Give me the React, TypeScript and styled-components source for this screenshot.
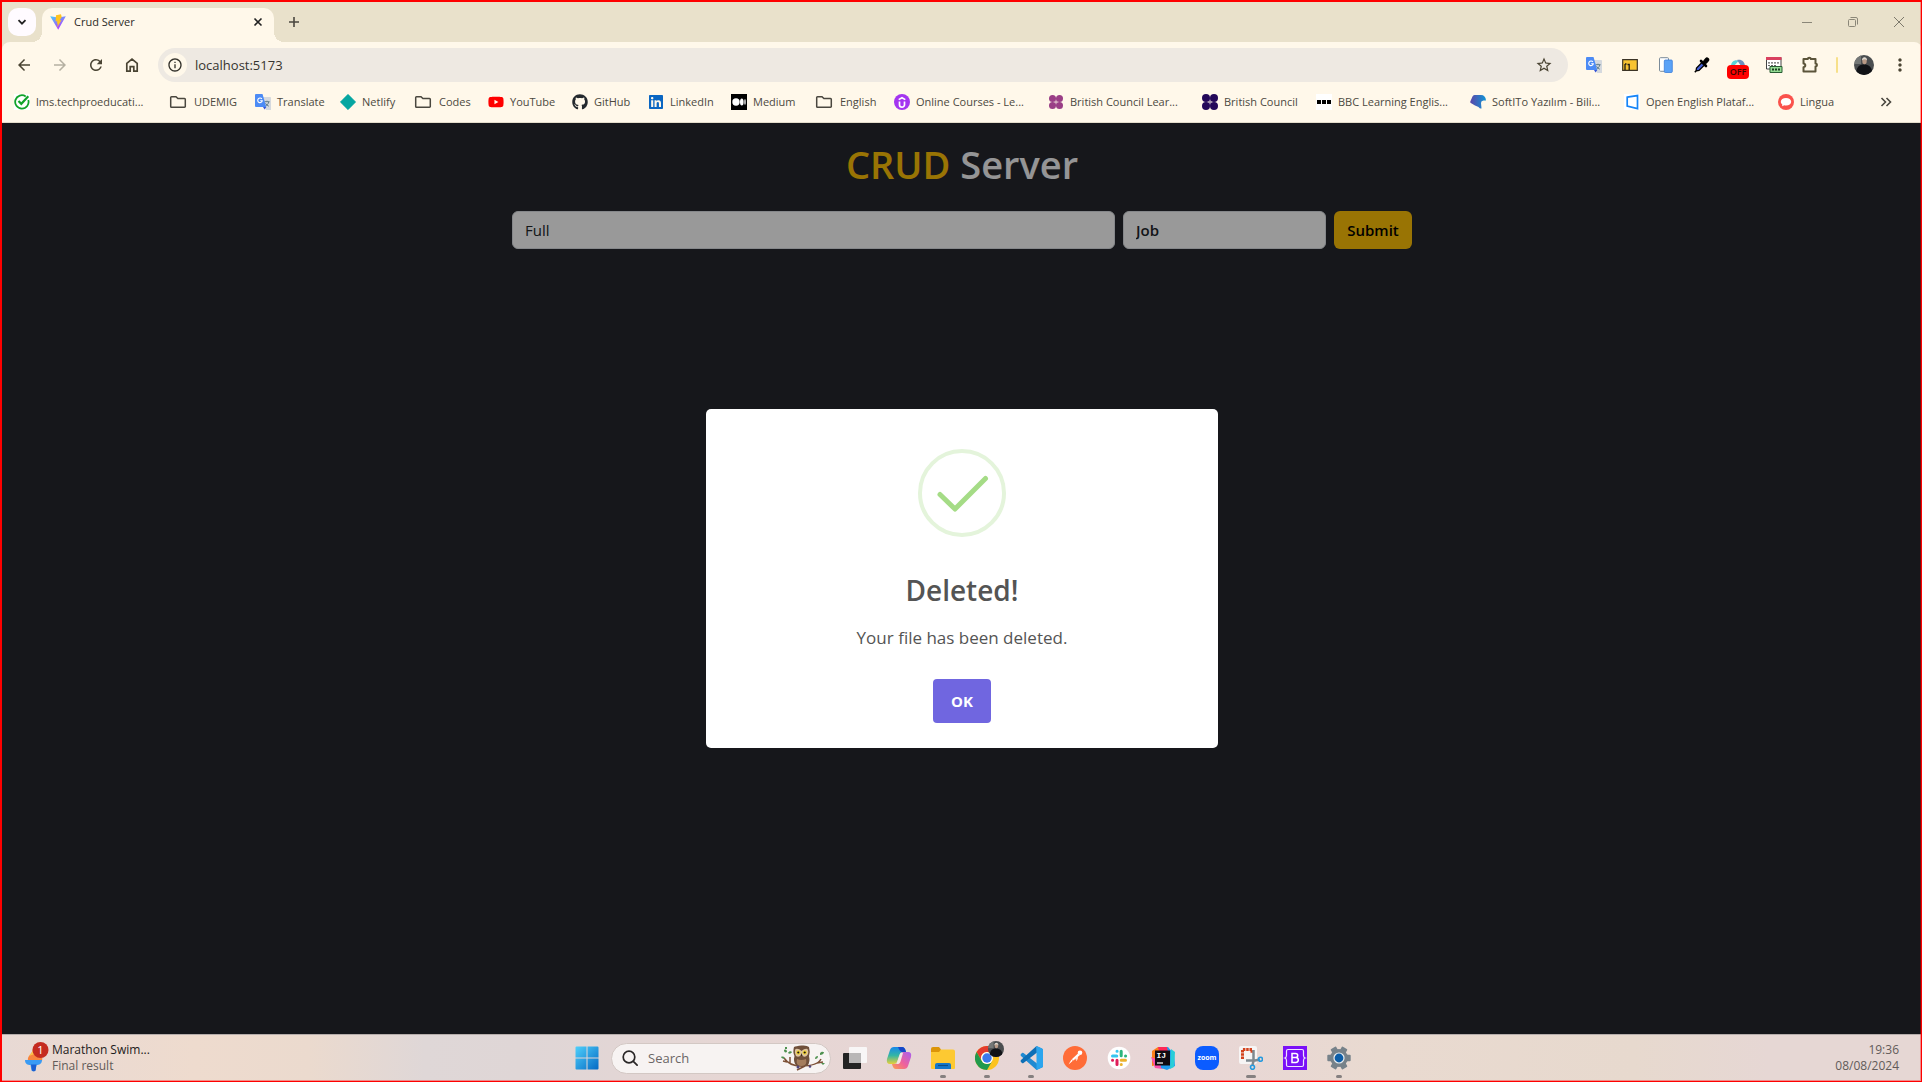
import React from "react";
import styled, { createGlobalStyle } from "styled-components";
import { FaGithub, FaYoutube, FaLinkedin } from "react-icons/fa";
import { MdArrowBack, MdArrowForward, MdRefresh, MdStarBorder, MdMoreVert, MdInfoOutline } from "react-icons/md";

const sans = `"Segoe UI", "Open Sans", "Noto Sans", sans-serif`;

const GlobalStyle = createGlobalStyle`
  * { box-sizing: border-box; }
  body { margin: 0; font-family: ${sans}; }
  button, input { font-family: inherit; }
  h1, h2, p { margin: 0; }
`;

const Screen = styled.div`
  position: relative;
  display: flex;
  flex-direction: column;
  min-height: 100vh;
  padding: 2px 0 0 2px;
  background: #ff0000;
  overflow: hidden;
  &::after {
    content: "";
    position: absolute;
    inset: 0;
    border: solid #ff0000;
    border-width: 2px 1px 1px 2px;
    box-shadow: inset -1px -1px 0 rgba(255, 0, 0, 0.35);
    pointer-events: none;
  }
`;

/* ---------- browser chrome ---------- */

const TabStrip = styled.div`
  display: flex;
  align-items: center;
  height: 40px;
  padding-left: 6px;
  background: #e9e1cb;
`;

const TabSearch = styled.button`
  display: grid;
  place-items: center;
  width: 28px;
  height: 28px;
  margin-right: 6px;
  padding: 0;
  border: 0;
  border-radius: 10px;
  background: #fffbff;
`;

const Tab = styled.div`
  position: relative;
  display: flex;
  align-items: center;
  align-self: flex-end;
  gap: 8px;
  width: 232px;
  height: 34px;
  padding: 0 8px 6px;
  border-radius: 10px 10px 0 0;
  background: #fff8ea;
  font-size: 11px;
  line-height: 16px;
  color: #2b2a26;
  &::before,
  &::after {
    content: "";
    position: absolute;
    bottom: 0;
    width: 10px;
    height: 10px;
  }
  &::before {
    left: -10px;
    background: radial-gradient(circle at 0 0, transparent 10px, #fff8ea 10px);
  }
  &::after {
    right: -10px;
    background: radial-gradient(circle at 100% 0, transparent 10px, #fff8ea 10px);
  }
`;

const TabTitle = styled.span`
  flex: 1;
`;

const PlainButton = styled.button<{ $w: number; $h: number }>`
  display: grid;
  place-items: center;
  width: ${(p) => p.$w}px;
  height: ${(p) => p.$h}px;
  padding: 0;
  border: 0;
  background: transparent;
  color: #4a4433;
`;

const NewTab = styled(PlainButton)`
  margin-left: 6px;
`;

const WindowControls = styled.div`
  display: flex;
  margin-left: auto;
`;

const Toolbar = styled.div`
  display: flex;
  align-items: center;
  padding: 6px 4px 3px;
  border-radius: 8px 8px 0 0;
  background: #fff8ea;
`;

const ToolbarBack = styled.div`
  background: #e9e1cb;
`;

const Omnibox = styled.div`
  display: flex;
  flex: 1;
  align-items: center;
  gap: 8px;
  height: 34px;
  margin: 0 8px;
  padding: 0 6px 0 5px;
  border-radius: 17px;
  background: #eee9e2;
`;

const SiteInfo = styled.button`
  display: grid;
  place-items: center;
  width: 24px;
  height: 24px;
  padding: 0;
  border: 0;
  border-radius: 50%;
  background: #fff8ea;
  color: #33312b;
`;

const Address = styled.input`
  flex: 1;
  min-width: 0;
  padding: 0;
  border: 0;
  outline: 0;
  background: transparent;
  font-size: 13px;
  line-height: 20px;
  color: #36342f;
`;

const Separator = styled.span`
  width: 2px;
  height: 16px;
  margin: 0 8px;
  border-radius: 1px;
  background: #f7e08a;
`;

const BookmarkBar = styled.nav`
  display: flex;
  align-items: center;
  height: 38px;
  padding: 0 22px 4px 12px;
  border-bottom: 1px solid #e3dccb;
  background: #fff8ea;
`;

const Bookmark = styled.a<{ $width: number }>`
  display: flex;
  flex: 0 0 ${(p) => p.$width}px;
  align-items: center;
  gap: 6px;
  font-size: 11px;
  line-height: 16px;
  color: #4c493f;
  text-decoration: none;
  white-space: nowrap;
  svg {
    flex: none;
  }
`;

const MoreBookmarks = styled(PlainButton)`
  margin-left: auto;
`;

/* ---------- page ---------- */

const Page = styled.main`
  position: relative;
  flex: 1;
  background: #25272d;
`;

const Content = styled.div`
  display: flex;
  flex-direction: column;
  gap: 23px;
  max-width: 900px;
  margin: 0 auto;
  padding-top: 17px;
`;

const Heading = styled.h1`
  font-size: 38px;
  font-weight: 600;
  line-height: 48px;
  text-align: center;
  color: #f8f9fa;
`;

const Accent = styled.span`
  color: #ffc107;
`;

const Form = styled.form`
  display: flex;
  gap: 8px;
`;

const Field = styled.input<{ $width?: number }>`
  flex: ${(p) => (p.$width ? `0 0 ${p.$width}px` : "1")};
  min-width: 0;
  height: 38px;
  padding: 0 12px;
  border: 1px solid #dee2e6;
  border-radius: 6px;
  background: #ffffff;
  font-size: 15px;
  font-weight: ${(p) => (p.$width ? 600 : 400)};
  color: #212529;
  &::placeholder {
    color: #212529;
    opacity: 1;
  }
`;

const Submit = styled.button`
  width: 78px;
  height: 38px;
  padding: 0;
  border: 0;
  border-radius: 6px;
  background: #ffc107;
  font-size: 15px;
  font-weight: 600;
  color: #000000;
`;

const Backdrop = styled.div`
  position: absolute;
  inset: 0;
  display: grid;
  place-items: center;
  background: rgba(0, 0, 0, 0.4);
`;

const Dialog = styled.div`
  display: flex;
  flex-direction: column;
  align-items: center;
  width: 512px;
  padding: 40px 0 25px;
  border-radius: 5px;
  background: #ffffff;
  color: #545454;
`;

const DialogTitle = styled.h2`
  margin-top: 33px;
  font-size: 28px;
  font-weight: 600;
  line-height: 40px;
`;

const DialogText = styled.p`
  margin-top: 16px;
  font-size: 17px;
  line-height: 24px;
`;

const Confirm = styled.button`
  width: 58px;
  height: 44px;
  margin-top: 29px;
  padding: 0;
  border: 0;
  border-radius: 4px;
  background: #7066e0;
  font-size: 15px;
  font-weight: 700;
  color: #ffffff;
`;

/* ---------- taskbar ---------- */

const Taskbar = styled.footer`
  display: grid;
  grid-template-columns: 1fr auto 1fr;
  align-items: center;
  height: 48px;
  padding: 0 0 1px 2px;
  border-top: 1px solid #b5adab;
  background: linear-gradient(90deg, #e8d9d4 0, #eedbce 10%, #ebdace 16%, #dfd7d7 22%, #dfd6d6 27%, #e6d6d4 38%, #e8d6d6 62%, #e9dad0 72%, #e7d9ce 85%, #e6d7d4 92%, #e6d7d4 100%);
`;

const Widget = styled.button`
  position: relative;
  display: flex;
  align-items: center;
  justify-self: start;
  padding: 0 0 0 20px;
  border: 0;
  background: transparent;
  text-align: left;
`;

const Lines = styled.span<{ $right?: boolean }>`
  display: flex;
  flex-direction: column;
  font-size: 12px;
  line-height: 16px;
  color: #625b59;
  text-align: ${(p) => (p.$right ? "right" : "left")};
`;

const Strong = styled.span`
  color: #1d1b1b;
`;

const Apps = styled.div`
  display: flex;
  align-items: center;
`;

const AppButton = styled.button<{ $bar?: number }>`
  position: relative;
  display: grid;
  place-items: center;
  width: 44px;
  height: 46px;
  padding: 0;
  border: 0;
  background: transparent;
  &::after {
    content: "";
    position: absolute;
    bottom: 3px;
    left: 50%;
    width: ${(p) => p.$bar ?? 0}px;
    height: 3px;
    border-radius: 2px;
    background: #858080;
    transform: translateX(-50%);
  }
`;

const SearchBox = styled.label`
  display: flex;
  align-items: center;
  gap: 10px;
  width: 220px;
  height: 31px;
  margin: 0 2px;
  padding: 0 5px 0 10px;
  border: 1px solid #d3c8c4;
  border-radius: 16px;
  background: #f7f3f2;
`;

const SearchInput = styled.input`
  flex: 1;
  min-width: 0;
  padding: 0;
  border: 0;
  outline: 0;
  background: transparent;
  font-size: 13px;
  line-height: 20px;
  &::placeholder {
    color: #6b6666;
    opacity: 1;
  }
`;

const Clock = styled.button`
  justify-self: end;
  padding: 0 23px 0 0;
  border: 0;
  background: transparent;
`;

/* ---------- drawings ---------- */

const Vite = () => (
  <svg width="16" height="16" viewBox="0 0 16 16">
    <defs>
      <linearGradient id="vite" x1="0" y1="0" x2=".6" y2="1">
        <stop offset="0" stopColor="#41d1ff" />
        <stop offset="1" stopColor="#bd34fe" />
      </linearGradient>
    </defs>
    <path d="M.2 2.2 8.2 15.8 15.8 2.2 8 3.6Z" fill="url(#vite)" />
    <path d="M11 .2 6 1.2l-.4 6.4 1.7-.4-.5 2.6 1.1-.3-.8 3.9L11.6 6l-2 .4L11.700 3Z" fill="#ffc31f" />
  </svg>
);

const TranslateIcon = () => (
  <svg width="16" height="16" viewBox="0 0 16 16">
    <path d="M6 3h9.200a.8.8 0 0 1 .8.8V16h-5Z" fill="#d5d9de" />
    <path d="M9.500 7.700h5M12 6.700v1M13.800 7.900c-.5 2-1.700 3.200-3 4M10.500 9.300c.8 1.300 1.900 2.200 3.300 2.900" stroke="#607d8b" fill="none" strokeWidth="1" />
    <path d="M1 0h6.500l3.800 13H1a1 1 0 0 1-1-1V1a1 1 0 0 1 1-1Z" fill="#4c8bf5" />
    <path d="M8 13h3.300L9.600 15.600Z" fill="#3555d8" />
    <path d="M6.900 5A2.300 2.300 0 1 0 7.300 6.700H5.200" stroke="#fff" fill="none" strokeWidth="1.100" />
  </svg>
);

const Folder = () => (
  <svg width="20" height="16" viewBox="0 0 20 16" fill="none" stroke="#4a473f" strokeWidth="1.500">
    <path d="M3.500 2.700H8l1.900 1.900h6.600a.8.8 0 0 1 .8.8v7.100a.8.8 0 0 1-.8.8h-13a.8.8 0 0 1-.8-.8v-9a.8.8 0 0 1 .8-.8Z" />
  </svg>
);

const Lms = () => (
  <svg width="16" height="16" viewBox="0 0 16 16" fill="none" stroke="#11a32b">
    <rect width="16" height="16" fill="#fff" stroke="none" />
    <path d="M11.700 2.400A6.700 6.700 0 1 0 14.300 6" strokeWidth="1.800" />
    <path d="M4.500 7 7.300 9.800 14.300 2.300" strokeWidth="2.200" />
  </svg>
);

const Netlify = () => (
  <svg width="16" height="16" viewBox="0 0 16 16">
    <path d="M8 .3 15.700 8 8 15.700.3 8Z" fill="#05a6a1" stroke="#05a6a1" strokeLinejoin="round" strokeWidth=".6" />
  </svg>
);

const Medium = () => (
  <svg width="16" height="16" viewBox="0 0 16 16">
    <rect width="16" height="16" fill="#000" />
    <circle cx="5" cy="8" r="3.700" fill="#fff" />
    <ellipse cx="10.800" cy="8" rx="1.800" ry="3.500" fill="#fff" />
    <ellipse cx="14" cy="8" rx=".7" ry="3.100" fill="#fff" />
  </svg>
);

const Udemy = () => (
  <svg width="16" height="16" viewBox="0 0 16 16" fill="none" stroke="#fff">
    <circle cx="8" cy="8" r="8" fill="#a435f0" stroke="none" />
    <path d="M5.500 7.500v3.300a2.500 2.400 0 0 0 5 0V7.500" strokeWidth="1.700" />
    <path d="M4.700 5.600 8 3.700l3.300 1.900" strokeWidth="1.600" />
  </svg>
);

const Dots = ({ color, r }: { color: string; r: number }) => (
  <svg width="16" height="16" viewBox="0 0 16 16" fill={color}>
    {[[8 - r, 8 - r], [8 + r, 8 - r], [8 - r, 8 + r], [8 + r, 8 + r]].map(([x, y]) => (
      <circle key={`${x}-${y}`} cx={x} cy={y} r={r} />
    ))}
    <rect x="6.500" y="4" width="3" height="8" opacity=".4" />
  </svg>
);

const Bbc = () => (
  <svg width="16" height="16" viewBox="0 0 16 16">
    <rect width="16" height="16" fill="#fff" />
    <path d="M1 6h4v4H1ZM6 6h4v4H6ZM11 6h4v4h-4Z" fill="#000" />
  </svg>
);

const Softito = () => (
  <svg width="16" height="16" viewBox="0 0 16 16">
    <defs>
      <linearGradient id="soft">
        <stop offset="0" stopColor="#5b46a8" />
        <stop offset="1" stopColor="#1195d6" />
      </linearGradient>
    </defs>
    <path d="M4.500 1H11q4.500 0 5 5.500h-2.500Q11 6.700 11 9l.5 5.500Q10 15 8.500 13L5 11.500.8 9Q0 8.500.3 7.500L2.500 2.500Q3 1 4.500 1Z" fill="url(#soft)" />
  </svg>
);

const OpenEnglish = () => (
  <svg width="16" height="16" viewBox="0 0 16 16">
    <rect width="16" height="16" fill="#fff" />
    <path d="M3.200 3.200 13.500 1.600v13L3.200 12.200Z" fill="none" stroke="#1685f8" strokeWidth="1.700" />
  </svg>
);

const Lingua = () => (
  <svg width="16" height="16" viewBox="0 0 16 16">
    <circle cx="8" cy="8" r="8" fill="#fa524c" />
    <path d="M8 4c3 0 5.200 1.500 5.200 3.700S11 11.400 8 11.400c-.6 0-1.200 0-1.700-.2L4.200 12.300V10.300C3.300 9.600 2.800 8.700 2.800 7.700 2.800 5.500 5 4 8 4Z" fill="#fff" />
  </svg>
);

const Home = () => (
  <svg width="16" height="16" viewBox="0 0 16 16" fill="none" stroke="#4a4433" strokeWidth="1.700">
    <path d="M2.800 14.200V6.300L8 2.200l5.200 4.100v7.900H9.800V9.600H6.200v4.600Z" />
  </svg>
);

const Avatar = ({ size }: { size: number }) => (
  <svg width={size} height={size} viewBox="0 0 20 20">
    <defs>
      <clipPath id={`face${size}`}><circle cx="10" cy="10" r="10" /></clipPath>
    </defs>
    <g clipPath={`url(#face${size})`}>
      <rect width="20" height="20" fill="#4b4e50" />
      <rect width="7" height="9" fill="#747776" />
      <path d="M2 20c0-8 3-10.500 8-10.500s8.500 2.500 8.500 10.500Z" fill="#101216" />
      <ellipse cx="10.500" cy="6" rx="2.200" ry="3.200" fill="#b99a86" />
      <path d="M8 5.500c-.3-4.500 5.300-4.500 5 0-1.500-1.800-3.500-1.800-5 0Z" fill="#ded9d0" />
    </g>
  </svg>
);

const Card = () => (
  <svg width="16" height="16" viewBox="0 0 16 16">
    <path d="M.7 2.700h14.600v10.600H.7Z" fill="#f7c331" stroke="#3b3426" strokeWidth="1.200" />
    <path d="M3 7v6M3 7h1.500M5.500 7.500h1.700v5.500" fill="none" stroke="#1d1b16" strokeWidth="1.300" />
  </svg>
);

const Devices = () => (
  <svg width="16" height="16" viewBox="0 0 16 16">
    <rect x="1.500" y=".7" width="9" height="13.600" rx="1" fill="#fff" stroke="#7b8b99" />
    <rect x="6.300" y="3" width="8" height="12.500" rx="1" fill="#5aa2f7" stroke="#3b7edb" strokeWidth=".8" />
  </svg>
);

const Dropper = () => (
  <svg width="16" height="16" viewBox="0 0 16 16">
    <path d="m2 14 .5-3 5.500-5.500 2.500 2.500L5 13.500Z" fill="#4660d8" stroke="#000" strokeWidth="1.300" />
    <path d="m7 4 5 5M9.300 6.300 13.200 2.400" stroke="#000" strokeWidth="2.600" strokeLinecap="round" />
    <path d="M13 2.700 11.500 4.500" stroke="#000" strokeWidth="4.500" strokeLinecap="round" />
    <path d="M.8 15.200 2 14" stroke="#000" strokeWidth="1.500" />
  </svg>
);

const OffWrap = styled.span`
  position: relative;
  display: block;
  width: 16px;
  height: 16px;
`;

const OffBadge = styled.span`
  position: absolute;
  top: 8px;
  left: -3px;
  width: 22px;
  border-radius: 4px;
  background: #ff0000;
  font-size: 9px;
  font-weight: 600;
  line-height: 14px;
  text-align: center;
  color: #3a0500;
`;

const Cloud = () => (
  <svg width="16" height="16" viewBox="0 0 16 16">
    <path d="M1 9c0-5 5-7 7.500-5L4 9Z" fill="#5ad2d8" />
    <path d="M7 3c5-1 7.500 2 8 6H11Z" fill="#6d8fc0" />
    <path d="M5 9c1-3 4-3 6 0Z" fill="#fff8ea" />
  </svg>
);

const CssCode = () => (
  <svg width="18" height="18" viewBox="0 0 18 18">
    <path d="M1.500 1.500h14.500v11.500H1.500Z" fill="#fff" stroke="#444" />
    <path d="M1 1h15.500v3H1Z" fill="#d9405f" />
    <path d="M3 6.800h11M3 9.500h8" stroke="#666" strokeWidth="1.200" strokeDasharray="2 1" />
    <path d="M5 10.500h12v6H5Z" fill="#93dc93" stroke="#285c33" />
    <path d="M7 13.500h8" stroke="#1c3c22" strokeWidth="2" strokeDasharray="2 1" />
  </svg>
);

const Puzzle = () => (
  <svg width="18" height="18" viewBox="0 0 18 18" fill="none" stroke="#5b543a" strokeWidth="2" strokeLinejoin="round">
    <path d="M2.500 3h4.200c.3-1.800 2.900-1.800 3.200 0h4.600v4.500c2 .3 2 2.700 0 3v5H2.500v-4.300c2.400-.3 2.400-3.500 0-3.800Z" />
  </svg>
);

const SuccessMark = () => (
  <svg width="88" height="88" viewBox="0 0 88 88" fill="none">
    <circle cx="44" cy="44" r="42" stroke="#e4f4db" strokeWidth="4" />
    <path d="M22 45.500 37 60 67.500 29.500" stroke="#a5dc86" strokeWidth="5" strokeLinecap="round" strokeLinejoin="round" />
  </svg>
);

const Torch = () => (
  <svg width="28" height="34" viewBox="0 0 28 34">
    <path d="M4 20c-1-6 4-6 5-12 3 0 6 2 7 5 2-1 3 4 2 7Z" fill="#f9853e" />
    <path d="M5 15c2-3 4-4 4-7l4 4Z" fill="#fcc449" />
    <path d="M1 19h17c0 4-3 5-5.500 5l-1 5.500c-.5 1-3.500 1-4 0l-1-5.500C3.500 24 1 23 1 19Z" fill="#3a9bf4" />
    <path d="M7 23.500h5.500l-1 6c-.5 1-3 1-3.500 0Z" fill="#1d5fd0" />
    <circle cx="16.500" cy="9" r="8" fill="#c42b1f" />
    <text x="16.500" y="13" textAnchor="middle" fontSize="11" fill="#fff">1</text>
  </svg>
);

const Windows = () => (
  <svg width="24" height="24" viewBox="0 0 24 24">
    <defs>
      <linearGradient id="win" x1="0" y1="0" x2="1" y2="1">
        <stop offset="0" stopColor="#4fd0fb" />
        <stop offset="1" stopColor="#0469c4" />
      </linearGradient>
    </defs>
    <path d="M1.500.5H11.500V11.500H.5V1.500a1 1 0 0 1 1-1ZM12.500.5h10a1 1 0 0 1 1 1v10h-11ZM.5 12.500h11v11h-10a1 1 0 0 1-1-1ZM12.500 12.500h11v10a1 1 0 0 1-1 1h-10Z" fill="url(#win)" />
  </svg>
);

const Magnifier = () => (
  <svg width="16" height="16" viewBox="0 0 16 16" fill="none" stroke="#2a2727" strokeWidth="1.700" strokeLinecap="round">
    <circle cx="7" cy="7" r="5.800" />
    <path d="m11.300 11.300 3.800 3.800" />
  </svg>
);

const Owl = () => (
  <svg width="44" height="26" viewBox="0 0 44 26">
    <path d="M3 13c4 6 9 8 17 8 9 0 17-1 20-7M6 17l-4-1M9 12v7M36 18l6-1M16 25l8-4" fill="none" stroke="#7d5036" strokeWidth="1.500" />
    <path d="M3 5c2-1 3 0 3 2-2 1-3 0-3-2ZM7 8c1-2 3-2 4-1-1 2-3 2-4 1ZM0 12c2-1 3 0 4 1-1 1-3 1-4-1ZM39 8c2-2 3-1 4-1 0 2-2 3-4 3ZM34 14c0-2 1-3 3-3 0 2-1 3-3 3ZM4 2h2v2H4ZM40 18h4l-2 2Z" fill="#4f9150" />
    <path d="M13 2q2-1 7.500-1.500T28 2q1.500 5 0 9 1.500 6-1.500 9.500-6 2-11.500 0-3-4-1.500-9.500-2-4-.5-9Z" fill="#70503a" />
    <path d="M14.500 4q3-1 6 2 3.500-3 6-2 2 4-1 7-2.500 2-5-1-3 3-5.500 1-2-4-.5-7Z" fill="#ddc3a2" />
    <path d="M16 14q4 2 9 0 1 4-1 6-4 2-7 0-2-2-1-6Z" fill="#a57d5c" />
    <circle cx="17.300" cy="7.500" r="2.200" fill="#f3d43a" />
    <circle cx="23.700" cy="7.500" r="2.200" fill="#f3d43a" />
    <circle cx="17.300" cy="7.500" r="1.100" fill="#21160f" />
    <circle cx="23.700" cy="7.500" r="1.100" fill="#21160f" />
    <path d="m20.500 8 1 3h-2Z" fill="#39281e" />
    <circle cx="17" cy="22" r="1.500" fill="#514479" />
    <circle cx="29" cy="21.500" r="1.300" fill="#514479" />
  </svg>
);

const TaskView = () => (
  <svg width="24" height="24" viewBox="0 0 24 24">
    <rect x="6" y="1" width="18" height="16" rx="1" fill="#f8f6f6" />
    <rect y="7" width="18" height="16" rx="1" fill="#232323" />
    <path d="M6 7h12v10H6Z" fill="#b9b7b7" />
  </svg>
);

const Copilot = () => (
  <svg width="26" height="24" viewBox="0 0 26 24">
    <defs>
      <linearGradient id="cp1" x1="0" y1="0" x2="0" y2="1">
        <stop offset="0" stopColor="#1688ea" />
        <stop offset=".5" stopColor="#34b6a5" />
        <stop offset="1" stopColor="#e8d03a" />
      </linearGradient>
      <linearGradient id="cp2" x1="1" y1="0" x2="0" y2="1">
        <stop offset="0" stopColor="#a75ff0" />
        <stop offset=".55" stopColor="#f0629a" />
        <stop offset="1" stopColor="#fba04c" />
      </linearGradient>
    </defs>
    <path d="M8 1h8q3 0 4 5h-3q-3 0-4 4l-2 6q-1 2-3 2H4q-4 0-3-5L4 4q1-3 4-3Z" fill="url(#cp1)" />
    <path d="M12 1h4q3 0 4 5h-4Q14 6 12 1Z" fill="#1647c8" />
    <path d="M18 6h4q4 0 3 5l-3 9q-1 3-4 3h-8q-3 0-4-5h3q3 0 4-4l2-6q1-2 3-2Z" fill="url(#cp2)" />
    <path d="m14.500 7-4 11h1.500q2 0 3-4l2-7Z" fill="#f3e4e4" />
  </svg>
);

const Explorer = () => (
  <svg width="24" height="24" viewBox="0 0 24 24">
    <path d="M0 3q0-2 2-2h6l2 2.500V9H0Z" fill="#dc9508" />
    <path d="M0 6h8l2-2.500h12q2 0 2 2V22q0 1-1 1H1q-1 0-1-1Z" fill="#fdc932" />
    <path d="M4 23v-4q0-2 2-2h12q2 0 2 2v4Z" fill="#1277cb" />
    <path d="M7 19.500h10" stroke="#0b4d88" strokeWidth="1.200" />
  </svg>
);

const ChromeWrap = styled.span`
  position: relative;
  display: block;
  width: 24px;
  height: 24px;
  & > svg + svg {
    position: absolute;
    top: -5px;
    right: -5px;
  }
`;

const Chrome = () => (
  <ChromeWrap>
    <svg width="24" height="24" viewBox="0 0 24 24">
      <circle cx="12" cy="12" r="12" fill="#fcc31e" />
      <path d="M1.600 6A12 12 0 0 1 22.400 6H12a6 6 0 0 0-5.200 9Z" fill="#e33b2e" />
      <path d="M1.600 6A12 12 0 0 0 12 24l5.200-9A6 6 0 0 1 6.800 15Z" fill="#219a4d" />
      <circle cx="12" cy="12" r="6" fill="#fff" />
      <circle cx="12" cy="12" r="4.700" fill="#3b79ea" />
    </svg>
    <Avatar size={16} />
  </ChromeWrap>
);

const VsCode = () => (
  <svg width="24" height="24" viewBox="0 0 24 24">
    <path d="m17.500 0 5.500 2.500q1 .5 1 1.500v16q0 1-1 1.500L17.500 24 2 10q-1-1 0-2l1-1q.7-.6 1.500 0L18 17.500v-11Z" fill="#1f8ad2" />
    <path d="M17.500 0 2 14q-1 1 0 2l1 1q.7.600 1.500 0L18 6.500Z" fill="#0d6fb6" />
    <path d="M17.500 0 23 2.500q1 .5 1 1.500v16q0 1-1 1.500L17.500 24Z" fill="#2ba5ee" />
  </svg>
);

const Postman = () => (
  <svg width="24" height="24" viewBox="0 0 24 24">
    <circle cx="12" cy="12" r="12" fill="#ff6c37" />
    <circle cx="17" cy="6.800" r="2.300" fill="#fff" />
    <path d="m15 7.500 1.800 1.800-6.500 5.200-1.500-1.300Z" fill="#fff" />
    <path d="m8.500 13.500 1.300 1.300L5.500 18.500Z" fill="#fff" />
    <path d="m12.500 13 2-1.500-1 3" fill="none" stroke="#fff" />
  </svg>
);

const Slack = () => (
  <svg width="24" height="24" viewBox="0 0 24 24" strokeWidth="3" strokeLinecap="round">
    <circle cx="12" cy="12" r="11.300" fill="#fff" />
    <path d="M5.500 10h4.300M10 5.300h.1" stroke="#36c5f0" />
    <path d="M14.200 5.300v4.500M18.500 10h.1" stroke="#2eb67d" />
    <path d="M14.200 14.200h4.300M14.200 18.600h.1" stroke="#ecb22e" />
    <path d="M10 14.200v4.400M5.500 14.200h.1" stroke="#e01e5a" />
  </svg>
);

const Idea = () => (
  <svg width="24" height="24" viewBox="0 0 24 24">
    <path d="m1 5 6-4 8 3-4 14-10 2Z" fill="#fc801d" />
    <path d="m0 11 7 3 5 9-8-1Z" fill="#fd4fae" />
    <path d="m8 2 9-1 6 7 1 12-8 4-6-2Z" fill="#1e9df1" />
    <path d="m7 1 9 0 1 5-8 3Z" fill="#fe2857" />
    <path d="m20 3 4 3-1 15-4 2Z" fill="#29cdd8" />
    <path d="M4 4.500h15v15H4Z" fill="#100b12" />
    <text x="5.500" y="11.500" fontSize="8" fontWeight="700" fill="#fff" fontFamily="Liberation Mono, monospace">IJ</text>
    <path d="M6 17h6" stroke="#fff" strokeWidth="1.200" />
  </svg>
);

const Zoom = () => (
  <svg width="24" height="24" viewBox="0 0 24 24">
    <rect width="24" height="24" rx="8" fill="#0b5cff" />
    <text x="12" y="14.300" textAnchor="middle" fontSize="7" fontWeight="700" fill="#fff">zoom</text>
  </svg>
);

const Snip = () => (
  <svg width="24" height="24" viewBox="0 0 24 24">
    <rect width="18" height="18" rx="2" fill="#f7f5f5" />
    <path d="M3.500 13V3.500H13v4" fill="none" stroke="#d4431e" strokeWidth="3" strokeDasharray="2.500 .8" />
    <path d="M14.500 4v11l-1 4M7 14.500h9l5-1" fill="none" stroke="#7f8990" strokeWidth="2.500" />
    <circle cx="13.500" cy="21.300" r="2" fill="none" stroke="#2299df" strokeWidth="1.600" />
    <circle cx="21.500" cy="13.300" r="2" fill="none" stroke="#2299df" strokeWidth="1.600" />
  </svg>
);

const Bootstrap = () => (
  <svg width="24" height="24" viewBox="0 0 24 24">
    <rect width="24" height="24" fill="#7a10f8" />
    <path d="M3.500 5q0-1.500 1.500-1.500h14q1.500 0 1.500 1.500v4.500q0 2 1.500 2.500-1.500.5-1.500 2.500V19q0 1.500-1.500 1.500H5q-1.500 0-1.500-1.500v-4.500Q3.500 12.500 2 12q1.500-.5 1.500-2.500Z" fill="none" stroke="#efe2ff" strokeWidth="1.200" />
    <path d="M9 7.500h3.500q2.200 0 2.200 2.100 0 2-2.200 2H9Zm0 4.100h3.700q2.600 0 2.600 2.400t-2.600 2.500H9Z" fill="none" stroke="#fff" strokeWidth="1.500" />
  </svg>
);

const Settings = () => (
  <svg width="24" height="24" viewBox="0 0 24 24">
    {[30, 90, 150].map((a) => (
      <rect key={a} x="8.800" y=".3" width="6.400" height="23.400" rx="1" fill="#77828a" transform={`rotate(${a} 12 12)`} />
    ))}
    <circle cx="12" cy="12" r="9" fill="#77828a" />
    <circle cx="12" cy="12" r="5.600" fill="#e9edef" />
    <circle cx="12" cy="12" r="4.400" fill="#0d5ea8" />
  </svg>
);

/* ---------- data ---------- */

const bookmarks: { label: string; width: number; icon: React.ReactNode }[] = [
  { label: "lms.techproeducati...", width: 154, icon: <Lms /> },
  { label: "UDEMIG", width: 87, icon: <Folder /> },
  { label: "Translate", width: 85, icon: <TranslateIcon /> },
  { label: "Netlify", width: 73, icon: <Netlify /> },
  { label: "Codes", width: 75, icon: <Folder /> },
  { label: "YouTube", width: 84, icon: <FaYoutube size={16} color="#ff0000" /> },
  { label: "GitHub", width: 76, icon: <FaGithub size={16} color="#24292e" /> },
  { label: "LinkedIn", width: 83, icon: <FaLinkedin size={16} color="#0a66c2" /> },
  { label: "Medium", width: 83, icon: <Medium /> },
  { label: "English", width: 80, icon: <Folder /> },
  { label: "Online Courses - Le...", width: 154, icon: <Udemy /> },
  { label: "British Council Lear...", width: 154, icon: <Dots color="#9a3e86" r={3.5} /> },
  { label: "British Council", width: 114, icon: <Dots color="#230859" r={4} /> },
  { label: "BBC Learning Englis...", width: 154, icon: <Bbc /> },
  { label: "SoftITo Yazılım - Bili...", width: 154, icon: <Softito /> },
  { label: "Open English Plataf...", width: 154, icon: <OpenEnglish /> },
  { label: "Lingua", width: 64, icon: <Lingua /> },
];

const extensions: { name: string; icon: React.ReactNode }[] = [
  { name: "Translate", icon: <TranslateIcon /> },
  { name: "Notes", icon: <Card /> },
  { name: "Devices", icon: <Devices /> },
  { name: "Colour picker", icon: <Dropper /> },
  { name: "Web tools", icon: <OffWrap><Cloud /><OffBadge>OFF</OffBadge></OffWrap> },
  { name: "CSS viewer", icon: <CssCode /> },
  { name: "Extensions", icon: <Puzzle /> },
];

const apps: { name: string; icon: React.ReactNode; bar?: number }[] = [
  { name: "Task view", icon: <TaskView /> },
  { name: "Copilot", icon: <Copilot /> },
  { name: "File Explorer", icon: <Explorer />, bar: 6 },
  { name: "Chrome", icon: <Chrome />, bar: 6 },
  { name: "Visual Studio Code", icon: <VsCode />, bar: 6 },
  { name: "Postman", icon: <Postman /> },
  { name: "Slack", icon: <Slack /> },
  { name: "IntelliJ IDEA", icon: <Idea /> },
  { name: "Zoom", icon: <Zoom /> },
  { name: "Snipping Tool", icon: <Snip />, bar: 10 },
  { name: "Bootstrap Studio", icon: <Bootstrap /> },
  { name: "Settings", icon: <Settings />, bar: 6 },
];

export default function App() {
  return (
    <Screen>
      <GlobalStyle />
      <header>
        <TabStrip>
          <TabSearch aria-label="Search tabs">
            <svg width="10" height="10" viewBox="0 0 10 10" fill="none" stroke="#222" strokeWidth="1.800"><path d="m1.500 3.200 3.500 3.500 3.500-3.500" /></svg>
          </TabSearch>
          <Tab>
            <Vite />
            <TabTitle>Crud Server</TabTitle>
            <PlainButton $w={16} $h={16} aria-label="Close tab">
              <svg width="10" height="10" viewBox="0 0 10 10" stroke="#222" strokeWidth="1.600"><path d="m1.500 1.500 7 7m0-7-7 7" /></svg>
            </PlainButton>
          </Tab>
          <NewTab $w={28} $h={28} aria-label="New tab">
            <svg width="12" height="12" viewBox="0 0 12 12" stroke="#4a473f" strokeWidth="1.600"><path d="M6 1v10M1 6h10" /></svg>
          </NewTab>
          <WindowControls>
            <PlainButton $w={46} $h={40} aria-label="Minimize">
              <svg width="10" height="10" viewBox="0 0 10 10" stroke="#8a8678"><path d="M0 5.500h10" /></svg>
            </PlainButton>
            <PlainButton $w={46} $h={40} aria-label="Restore">
              <svg width="10" height="10" viewBox="0 0 10 10" fill="none" stroke="#8a8678"><rect x=".5" y="2.500" width="7" height="7" rx="1" /><path d="M2.500.5H8A1.500 1.500 0 0 1 9.500 2v5.500" /></svg>
            </PlainButton>
            <PlainButton $w={46} $h={40} aria-label="Close">
              <svg width="10" height="10" viewBox="0 0 10 10" stroke="#7d796c"><path d="m0 0 10 10M10 0 0 10" /></svg>
            </PlainButton>
          </WindowControls>
        </TabStrip>
        <ToolbarBack>
          <Toolbar>
            <PlainButton $w={36} $h={34} aria-label="Back"><MdArrowBack size={18} /></PlainButton>
            <PlainButton $w={36} $h={34} aria-label="Forward" disabled><MdArrowForward size={18} color="#b5b0a2" /></PlainButton>
            <PlainButton $w={36} $h={34} aria-label="Reload"><MdRefresh size={18} /></PlainButton>
            <PlainButton $w={36} $h={34} aria-label="Home"><Home /></PlainButton>
            <Omnibox>
              <SiteInfo aria-label="Site information"><MdInfoOutline size={16} /></SiteInfo>
              <Address aria-label="Address" defaultValue="localhost:5173" />
              <PlainButton $w={36} $h={28} aria-label="Bookmark this tab"><MdStarBorder size={18} /></PlainButton>
            </Omnibox>
            {extensions.map((e) => (
              <PlainButton key={e.name} $w={36} $h={34} aria-label={e.name}>{e.icon}</PlainButton>
            ))}
            <Separator />
            <PlainButton $w={36} $h={34} aria-label="Profile"><Avatar size={20} /></PlainButton>
            <PlainButton $w={36} $h={34} aria-label="Menu"><MdMoreVert size={20} /></PlainButton>
          </Toolbar>
        </ToolbarBack>
        <BookmarkBar>
          {bookmarks.map((b) => (
            <Bookmark key={b.label} href="#" $width={b.width}>
              {b.icon}
              {b.label}
            </Bookmark>
          ))}
          <MoreBookmarks $w={28} $h={28} aria-label="More bookmarks">
            <svg width="12" height="10" viewBox="0 0 12 10" fill="none" stroke="#4a473f" strokeWidth="1.600"><path d="m1.500 1 4 4-4 4M6.500 1l4 4-4 4" /></svg>
          </MoreBookmarks>
        </BookmarkBar>
      </header>

      <Page>
        <Content>
          <Heading><Accent>CRUD</Accent> Server</Heading>
          <Form onSubmit={(e) => e.preventDefault()}>
            <Field aria-label="Full name" placeholder="Full" />
            <Field aria-label="Job" placeholder="Job" $width={203} />
            <Submit type="submit">Submit</Submit>
          </Form>
        </Content>
        <Backdrop>
          <Dialog role="dialog" aria-modal="true" aria-labelledby="dialog-title">
            <SuccessMark />
            <DialogTitle id="dialog-title">Deleted!</DialogTitle>
            <DialogText>Your file has been deleted.</DialogText>
            <Confirm type="button">OK</Confirm>
          </Dialog>
        </Backdrop>
      </Page>

      <Taskbar>
        <Widget>
          <Torch />
          <Lines>
            <Strong>Marathon Swim...</Strong>
            <span>Final result</span>
          </Lines>
        </Widget>
        <Apps>
          <AppButton aria-label="Start"><Windows /></AppButton>
          <SearchBox>
            <Magnifier />
            <SearchInput aria-label="Search" placeholder="Search" />
            <Owl />
          </SearchBox>
          {apps.map((a) => (
            <AppButton key={a.name} $bar={a.bar} aria-label={a.name}>{a.icon}</AppButton>
          ))}
        </Apps>
        <Clock>
          <Lines $right>
            <span>19:36</span>
            <span>08/08/2024</span>
          </Lines>
        </Clock>
      </Taskbar>
    </Screen>
  );
}
